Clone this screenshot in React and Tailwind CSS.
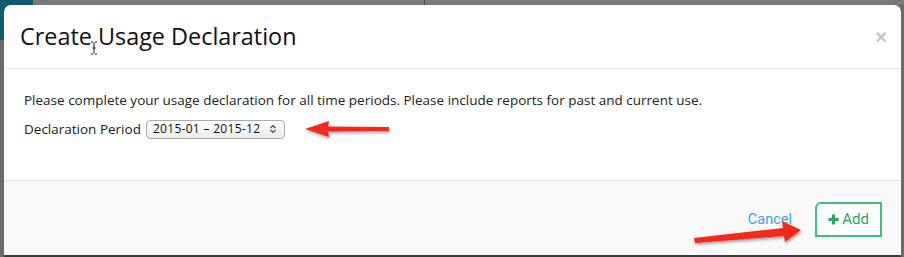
import React from 'react';

export default function App() {
  return (
    <div
      className="relative w-[904px] h-[257px] overflow-hidden bg-[#6a6a6a]"
      style={{ fontFamily: '"Open Sans", "Liberation Sans", sans-serif' }}
    >
      {/* background page bits */}
      <div className="absolute left-0 top-0 w-[33px] h-[40px] bg-[#0f5a6e]" />
      <div className="absolute left-[33px] top-0 w-[871px] h-[5px] bg-[#7a7a7a]" />
      <div className="absolute left-[424px] top-0 w-[1px] h-[5px] bg-[#444]" />

      <div className="absolute left-[4px] top-[5px] w-[897px] h-[250px] bg-white rounded-t-[7px] flex flex-col overflow-hidden">
        <div className="h-[64px] border-b border-[#e5e5e5] flex items-center justify-between pl-[16px] pr-[14px]">
          <h1 className="text-[23.4px] text-[#111] leading-none">Create Usage Declaration</h1>
          <span className="text-[#c4c4c4] text-[20px] font-bold leading-none" style={{ fontFamily: '"Liberation Sans", sans-serif' }}>×</span>
        </div>
        <div className="h-[111px] px-[20px] pt-[21px] text-[13.5px] text-[#222]">
          <p className="leading-[20px]">
            Please complete your usage declaration for all time periods. Please include reports for past and current use.
          </p>
          <div className="flex items-center mt-[9px]">
            <span className="leading-[20px]">Declaration Period</span>
            <div className="ml-[5px] w-[139px] h-[19px] rounded-[4px] border border-[#aaa] bg-gradient-to-b from-white to-[#ececec] flex items-center justify-between pl-[6px] pr-[8px] text-[12px] text-[#111] tracking-[0.3px]">
              <span>2015-01 – 2015-12</span>
              <svg width="6" height="10" viewBox="0 0 6 10">
                <path d="M0.5 4 L3 1.5 L5.5 4 M0.5 6 L3 8.5 L5.5 6" fill="none" stroke="#444" strokeWidth="1.2" />
              </svg>
            </div>
          </div>
        </div>
        <div className="flex-1 bg-[#fafafa] border-t border-[#e5e5e5] flex items-center justify-end pr-[19px] pt-[3px] gap-[23px]" style={{ fontFamily: 'Roboto, "Liberation Sans", sans-serif' }}>
          <span className="text-[#3ba4dc] text-[14.5px]">Cancel</span>
          <div className="w-[67px] h-[35px] border-2 border-[#3cc07a] rounded-tl-[6px] bg-white flex items-center justify-center gap-[3px] text-[#2aa862] text-[15px]">
            <svg width="11" height="11" viewBox="0 0 11 11">
              <path d="M5.5 0.5 V10.5 M0.5 5.5 H10.5" stroke="#2aa862" strokeWidth="3" />
            </svg>
            <span>Add</span>
          </div>
        </div>
      </div>
      <div className="absolute left-[4px] top-[255px] w-[897px] h-[2px] bg-[#3a3a3a]" />

      {/* cursor */}
      <svg className="absolute left-[90px] top-[41px]" width="8" height="14" viewBox="0 0 8 14">
        <path d="M1 1 H3 M5 1 H7 M4 1.5 V12.5 M1 13 H3 M5 13 H7 M2.5 7 H5.5" stroke="#111" strokeWidth="1" fill="none" />
      </svg>

      {/* annotation arrows */}
      <svg className="absolute left-0 top-0" width="904" height="257" viewBox="0 0 904 257">
        <defs>
          <filter id="sh" x="-10%" y="-50%" width="120%" height="200%">
            <feDropShadow dx="1" dy="2" stdDeviation="1.5" floodColor="#000" floodOpacity="0.35" />
          </filter>
        </defs>
        <g filter="url(#sh)" fill="#f2291c">
          <path d="M389 127 L328 126.5 L329 121 L305 129 L329 137 L328 131.5 L389 131 Z" />
          <path d="M695 243 L784 236 L785 242 L801 230 L782 221 L783 228 L694 238 Z" />
        </g>
      </svg>
    </div>
  );
}
